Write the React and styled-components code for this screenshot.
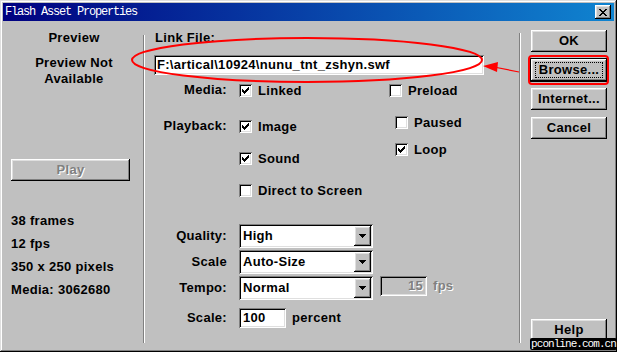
import React from 'react';
import styled, { createGlobalStyle } from 'styled-components';

const GlobalStyle = createGlobalStyle`
  html, body {
    margin: 0;
    padding: 0;
    background: #c0c0c0;
  }
  body {
    width: 617px;
    height: 352px;
    overflow: hidden;
  }
`;

// classic 3D edges
const raised = `
  box-shadow: inset -1px -1px #000, inset 1px 1px #fff,
    inset -2px -2px #808080, inset 2px 2px #dfdfdf;
`;
const sunken = `
  box-shadow: inset 1px 1px #808080, inset -1px -1px #fff,
    inset 2px 2px #000, inset -2px -2px #dfdfdf;
`;

const Window = styled.div`
  position: relative;
  width: 617px;
  height: 352px;
  box-sizing: border-box;
  padding: 3px;
  background: #c0c0c0;
  box-shadow: inset -1px -1px #000, inset 1px 1px #dfdfdf,
    inset -2px -2px #808080, inset 2px 2px #fff;
  display: flex;
  flex-direction: column;
  font: bold 13px "Liberation Sans", Arial, sans-serif;
  letter-spacing: 0.3px;
  color: #000;
`;

const TitleBar = styled.div`
  height: 18px;
  flex: none;
  display: flex;
  align-items: center;
  padding-left: 2px;
  background: linear-gradient(90deg, #000080, #1084d0);
`;

const TitleText = styled.span`
  font: normal 12px "Liberation Mono", "Courier New", monospace;
  letter-spacing: -1.2px;
  color: #fff;
`;

const CloseButton = styled.div`
  margin-left: auto;
  margin-right: 3px;
  width: 16px;
  height: 14px;
  background: #c0c0c0;
  ${raised}
  display: flex;
  align-items: center;
  justify-content: center;
`;

const Body = styled.div`
  flex: 1;
  display: flex;
`;

const LeftPane = styled.div`
  width: 140px;
  flex: none;
  box-sizing: border-box;
  padding-left: 8px;
  display: flex;
  flex-direction: column;
`;

const Heading = styled.div`
  margin-top: ${({ $top }) => $top}px;
  margin-left: -6px;
  text-align: center;
  line-height: 16px;
`;

const Button = styled.div`
  position: relative;
  box-sizing: border-box;
  width: ${({ $w }) => $w || 76}px;
  height: 22px;
  flex: none;
  margin-top: ${({ $top }) => ($top === 'auto' ? 'auto' : `${$top}px`)};
  background: #c0c0c0;
  ${raised}
  ${({ $default }) =>
    $default &&
    `box-shadow: 0 0 0 1px #000, inset -1px -1px #000, inset 1px 1px #fff,
      inset -2px -2px #808080, inset 2px 2px #dfdfdf;`}
  display: flex;
  align-items: center;
  justify-content: center;
  line-height: 16px;
  color: ${({ $disabled }) => ($disabled ? '#808080' : '#000')};
  text-shadow: ${({ $disabled }) => ($disabled ? '1px 1px #fff' : 'none')};
`;

const FocusRing = styled.span`
  position: absolute;
  inset: 3px 4px;
  border: 1px dotted #000;
`;

const StatList = styled.div`
  margin-top: 28px;
  display: flex;
  flex-direction: column;
`;

const Stat = styled.div`
  line-height: 23px;
`;

const Separator = styled.div`
  flex: none;
  width: 0;
  height: ${({ $h }) => $h}px;
  margin-top: ${({ $top }) => $top}px;
  border-left: 1px solid #808080;
  border-right: 1px solid #fff;
`;

const MainPane = styled.div`
  width: 374px;
  flex: none;
  display: flex;
  flex-direction: column;
`;

const FieldCaption = styled.div`
  margin: 9px 0 0 10px;
  line-height: 16px;
`;

const PathField = styled.div`
  margin: 9px 0 0 9px;
  width: 330px;
  height: 20px;
  box-sizing: border-box;
  padding-left: 3px;
  background: #fff;
  ${sunken}
  line-height: 20px;
  white-space: nowrap;
`;

const Options = styled.div`
  display: flex;
`;

const LabelColumn = styled.div`
  width: 82px;
  flex: none;
  display: flex;
  flex-direction: column;
  text-align: right;
`;

const OptionLabel = styled.div`
  margin-top: ${({ $top }) => $top}px;
  line-height: 16px;
`;

const CheckColumn = styled.div`
  width: ${({ $w }) => ($w ? `${$w}px` : 'auto')};
  margin-left: ${({ $left }) => $left || 0}px;
  flex: none;
  display: flex;
  flex-direction: column;
`;

const CheckRow = styled.div`
  display: flex;
  align-items: center;
  gap: 6px;
  height: 16px;
  margin-top: ${({ $top }) => $top}px;
  margin-left: ${({ $indent }) => $indent || 0}px;
  white-space: nowrap;
`;

const Box = styled.span`
  width: 13px;
  height: 13px;
  flex: none;
  background: #fff;
  ${sunken}
  display: block;
  margin-top: 1px;
  svg {
    display: block;
  }
`;

const Form = styled.div`
  margin-top: 26px;
  display: flex;
  flex-direction: column;
`;

const FormRow = styled.div`
  display: flex;
  align-items: flex-start;
  margin-top: ${({ $top }) => $top}px;
`;

const FormLabel = styled.div`
  width: 82px;
  margin-right: 12px;
  text-align: right;
  line-height: ${({ $h }) => $h}px;
`;

const Select = styled.div`
  width: 134px;
  height: 24px;
  box-sizing: border-box;
  background: #fff;
  ${sunken}
  display: flex;
  padding: 2px;
`;

const SelectValue = styled.span`
  flex: 1;
  padding-left: 2px;
  line-height: 20px;
`;

const DropButton = styled.span`
  width: 17px;
  height: 20px;
  background: #c0c0c0;
  ${raised}
  display: flex;
  align-items: center;
  justify-content: center;
`;

const SmallField = styled.div`
  width: 47px;
  height: 20px;
  box-sizing: border-box;
  margin-left: ${({ $left }) => $left || 0}px;
  background: ${({ $disabled }) => ($disabled ? '#c0c0c0' : '#fff')};
  ${sunken}
  line-height: 20px;
  padding: 0 4px;
  text-align: ${({ $disabled }) => ($disabled ? 'right' : 'left')};
  color: ${({ $disabled }) => ($disabled ? '#808080' : '#000')};
  text-shadow: ${({ $disabled }) => ($disabled ? '1px 1px #fff' : 'none')};
`;

const Unit = styled.span`
  margin-left: 6px;
  line-height: 20px;
  color: ${({ $disabled }) => ($disabled ? '#808080' : '#000')};
  text-shadow: ${({ $disabled }) => ($disabled ? '1px 1px #fff' : 'none')};
`;

const ButtonPane = styled.div`
  flex: 1;
  box-sizing: border-box;
  padding: 9px 0 8px 10px;
  display: flex;
  flex-direction: column;
`;

const Annotation = styled.svg`
  position: absolute;
  left: 0;
  top: 0;
  pointer-events: none;
`;

const Watermark = styled.div`
  position: absolute;
  right: 0;
  bottom: 2px;
  width: 87px;
  height: 12px;
  background: #000;
  border-radius: 2px;
  color: #fff;
  font: normal 11px "Liberation Mono", monospace;
  letter-spacing: -0.95px;
  line-height: 12px;
  text-align: center;
`;

const checkPath =
  'M9 3h1v1h-1z M8 4h2v1h-2z M3 5h1v1h-1z M7 5h3v1h-3z M3 6h2v1h-2z M6 6h3v1h-3z M3 7h5v1h-5z M4 8h3v1h-3z M5 9h1v1h-1z';

function Check({ checked, label, top, indent }) {
  return (
    <CheckRow $top={top} $indent={indent}>
      <Box>
        {checked && (
          <svg width="13" height="13" shapeRendering="crispEdges">
            <path d={checkPath} fill="#000" />
          </svg>
        )}
      </Box>
      {label}
    </CheckRow>
  );
}

function Dropdown({ value }) {
  return (
    <Select>
      <SelectValue>{value}</SelectValue>
      <DropButton>
        <svg width="7" height="4" shapeRendering="crispEdges">
          <path d="M0 0h7v1h-7z M1 1h5v1h-5z M2 2h3v1h-3z M3 3h1v1h-1z" fill="#000" />
        </svg>
      </DropButton>
    </Select>
  );
}

export default function App() {
  return (
    <>
      <GlobalStyle />
      <Window>
        <TitleBar>
          <TitleText>Flash Asset Properties</TitleText>
          <CloseButton>
            <svg width="8" height="7" shapeRendering="crispEdges">
              <path
                d="M0 0h2v1h-2z M6 0h2v1h-2z M1 1h2v1h-2z M5 1h2v1h-2z M2 2h4v1h-4z M3 3h2v1h-2z M2 4h4v1h-4z M1 5h2v1h-2z M5 5h2v1h-2z M0 6h2v1h-2z M6 6h2v1h-2z"
                fill="#000"
              />
            </svg>
          </CloseButton>
        </TitleBar>

        <Body>
          <LeftPane>
            <Heading $top={9}>Preview</Heading>
            <Heading $top={9}>
              Preview Not
              <br />
              Available
            </Heading>
            <Button $w={119} $top={72} $disabled>
              Play
            </Button>
            <StatList>
              <Stat>38 frames</Stat>
              <Stat>12 fps</Stat>
              <Stat>350 x 250 pixels</Stat>
              <Stat>Media: 3062680</Stat>
            </StatList>
          </LeftPane>

          <Separator $top={14} $h={308} />

          <MainPane>
            <FieldCaption>Link File:</FieldCaption>
            <PathField>F:\artical\10924\nunu_tnt_zshyn.swf</PathField>

            <Options>
              <LabelColumn>
                <OptionLabel $top={7}>Media:</OptionLabel>
                <OptionLabel $top={20}>Playback:</OptionLabel>
              </LabelColumn>
              <CheckColumn $left={12} $w={150}>
                <Check checked label="Linked" top={7} />
                <Check checked label="Image" top={20} />
                <Check checked label="Sound" top={16} />
                <Check label="Direct to Screen" top={16} />
              </CheckColumn>
              <CheckColumn>
                <Check label="Preload" top={7} />
                <Check label="Paused" top={16} indent={6} />
                <Check checked label="Loop" top={11} indent={6} />
              </CheckColumn>
            </Options>

            <Form>
              <FormRow $top={0}>
                <FormLabel $h={24}>Quality:</FormLabel>
                <Dropdown value="High" />
              </FormRow>
              <FormRow $top={2}>
                <FormLabel $h={24}>Scale</FormLabel>
                <Dropdown value="Auto-Size" />
              </FormRow>
              <FormRow $top={2}>
                <FormLabel $h={24}>Tempo:</FormLabel>
                <Dropdown value="Normal" />
                <SmallField $left={7} $disabled>
                  15
                </SmallField>
                <Unit $disabled>fps</Unit>
              </FormRow>
              <FormRow $top={8}>
                <FormLabel $h={20}>Scale:</FormLabel>
                <SmallField>100</SmallField>
                <Unit>percent</Unit>
              </FormRow>
            </Form>
          </MainPane>

          <Separator $top={12} $h={310} />

          <ButtonPane>
            <Button $top={0}>OK</Button>
            <Button $top={7} $default>
              Browse...
              <FocusRing />
            </Button>
            <Button $top={7}>Internet...</Button>
            <Button $top={7}>Cancel</Button>
            <Button $top="auto">Help</Button>
          </ButtonPane>
        </Body>

        <Annotation width="617" height="352">
          <ellipse cx="307" cy="60" rx="175" ry="22" fill="none" stroke="#f00" strokeWidth="2" />
          <line x1="519" y1="72" x2="494" y2="67" stroke="#f00" strokeWidth="1.2" />
          <polygon points="483,66 498,62 497,72" fill="#f00" />
          <rect x="529" y="56" width="79" height="28" rx="3" fill="none" stroke="#f00" strokeWidth="2" />
        </Annotation>

        <Watermark>pconline.com.cn</Watermark>
      </Window>
    </>
  );
}
